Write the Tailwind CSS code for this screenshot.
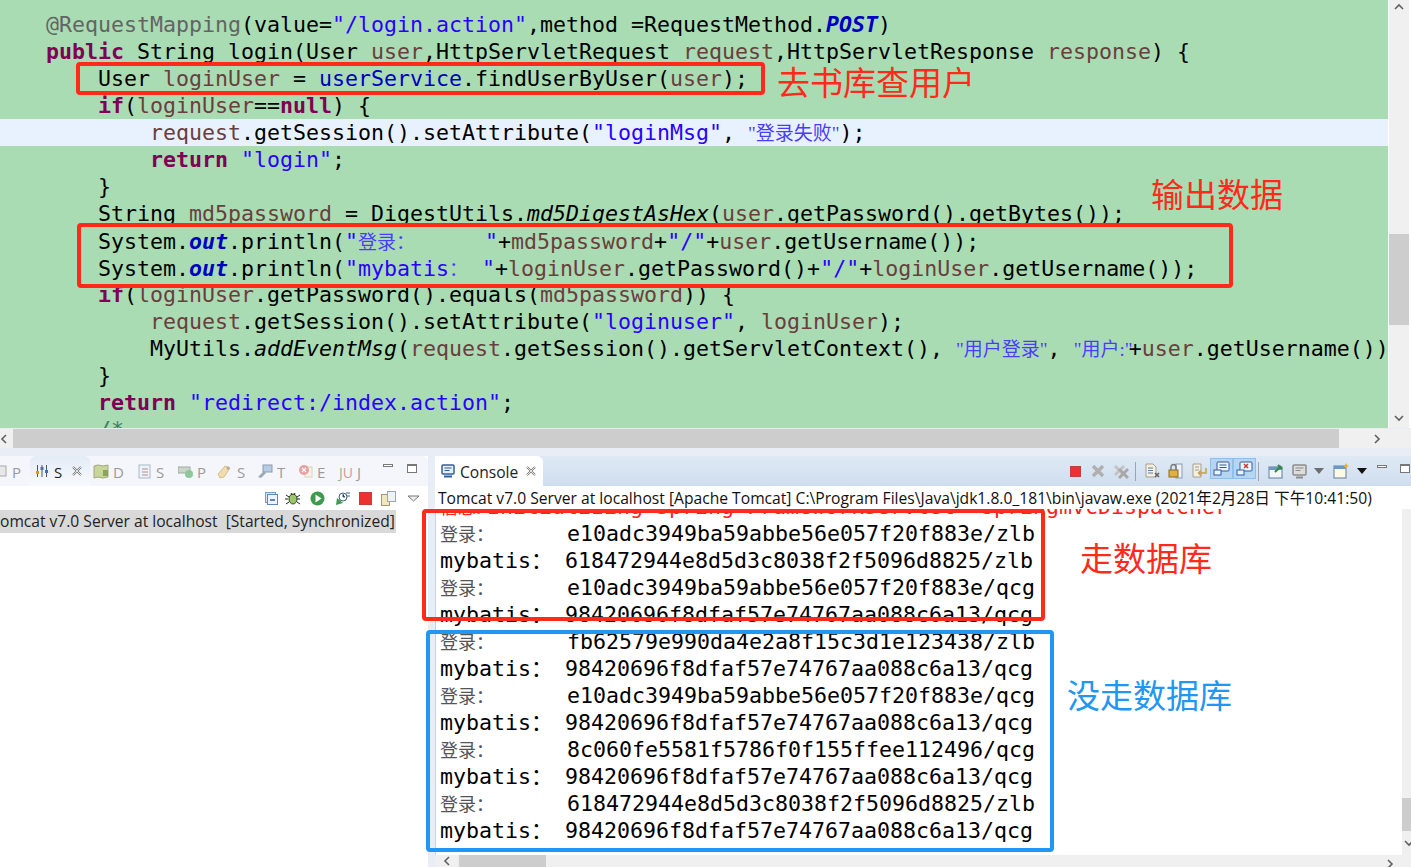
<!DOCTYPE html>
<html lang="zh-CN">
<head>
<meta charset="UTF-8">
<title>Eclipse login</title>
<script src="https://cdn.jsdelivr.net/npm/@tailwindcss/browser@4"></script>
</head>
<body class="relative w-[1411px] h-[867px] overflow-hidden bg-[#e9edf6] font-['Open_Sans','Noto_Sans_CJK_SC',sans-serif]">

<!-- editor -->
<div class="flex h-[428px]">
  <div class="flex-1 min-w-0 overflow-hidden bg-[#aadcb3] pt-[11px] [&>div]:whitespace-pre text-black font-['DejaVu_Sans_Mono',monospace] text-[21.6px] leading-[27px]">
    <div class="h-[27px] pl-[46px]"><span class="text-[#646464]">@RequestMapping</span>(value=<span class="text-[#2a00ff]">"/login.action"</span>,method =RequestMethod.<span class="text-[#0000c0] italic font-bold">POST</span>)</div>
    <div class="h-[27px] pl-[46px]"><span class="text-[#7f0055] font-bold">public</span> String login(User <span class="text-[#6a3e3e]">user</span>,HttpServletRequest <span class="text-[#6a3e3e]">request</span>,HttpServletResponse <span class="text-[#6a3e3e]">response</span>) {</div>
    <div class="h-[27px] pl-[46px]">    User <span class="text-[#6a3e3e]">loginUser</span> = <span class="text-[#0000c0]">userService</span>.findUserByUser(<span class="text-[#6a3e3e]">user</span>);</div>
    <div class="h-[27px] pl-[46px]">    <span class="text-[#7f0055] font-bold">if</span>(<span class="text-[#6a3e3e]">loginUser</span>==<span class="text-[#7f0055] font-bold">null</span>) {</div>
    <div class="h-[27px] pl-[46px] bg-[#e8f2fe]">        <span class="text-[#6a3e3e]">request</span>.getSession().setAttribute(<span class="text-[#2a00ff]">"loginMsg"</span>, <span class="text-[#4a3cff] font-['Liberation_Serif','Noto_Sans_CJK_SC',serif] text-[19px]">"登录失败"</span>);</div>
    <div class="h-[27px] pl-[46px]">        <span class="text-[#7f0055] font-bold">return</span> <span class="text-[#2a00ff]">"login"</span>;</div>
    <div class="h-[27px] pl-[46px]">    }</div>
    <div class="h-[27px] pl-[46px]">    String <span class="text-[#6a3e3e]">md5password</span> = DigestUtils.<span class="italic">md5DigestAsHex</span>(<span class="text-[#6a3e3e]">user</span>.getPassword().getBytes());</div>
    <div class="h-[27px] pl-[46px]">    System.<span class="text-[#0000c0] italic font-bold">out</span>.println(<span class="text-[#2a00ff]">"</span><span class="inline-block w-[127px] text-[#4a3cff] font-['Noto_Sans_CJK_SC',sans-serif] text-[19px]">登录：</span><span class="text-[#2a00ff]">"</span>+<span class="text-[#6a3e3e]">md5password</span>+<span class="text-[#2a00ff]">"/"</span>+<span class="text-[#6a3e3e]">user</span>.getUsername());</div>
    <div class="h-[27px] pl-[46px]">    System.<span class="text-[#0000c0] italic font-bold">out</span>.println(<span class="text-[#2a00ff]">"mybatis</span><span class="inline-block w-[33px] text-[#4a3cff] font-['Noto_Sans_CJK_SC',sans-serif] text-[19px]">：</span><span class="text-[#2a00ff]">"</span>+<span class="text-[#6a3e3e]">loginUser</span>.getPassword()+<span class="text-[#2a00ff]">"/"</span>+<span class="text-[#6a3e3e]">loginUser</span>.getUsername());</div>
    <div class="h-[27px] pl-[46px]">    <span class="text-[#7f0055] font-bold">if</span>(<span class="text-[#6a3e3e]">loginUser</span>.getPassword().equals(<span class="text-[#6a3e3e]">md5password</span>)) {</div>
    <div class="h-[27px] pl-[46px]">        <span class="text-[#6a3e3e]">request</span>.getSession().setAttribute(<span class="text-[#2a00ff]">"loginuser"</span>, <span class="text-[#6a3e3e]">loginUser</span>);</div>
    <div class="h-[27px] pl-[46px]">        MyUtils.<span class="italic">addEventMsg</span>(<span class="text-[#6a3e3e]">request</span>.getSession().getServletContext(), <span class="text-[#4a3cff] font-['Liberation_Serif','Noto_Sans_CJK_SC',serif] text-[19px]">"用户登录"</span>, <span class="inline-block w-[55px] text-[#4a3cff] font-['Liberation_Serif','Noto_Sans_CJK_SC',serif] text-[19px]">"用户:"</span>+<span class="text-[#6a3e3e]">user</span>.getUsername())</div>
    <div class="h-[27px] pl-[46px]">    }</div>
    <div class="h-[27px] pl-[46px]">    <span class="text-[#7f0055] font-bold">return</span> <span class="text-[#2a00ff]">"redirect:/index.action"</span>;</div>
    <div class="h-[27px] pl-[46px]">    <span class="text-[#3f7f5f]">/*</span></div>
  </div>
  <!-- editor vertical scrollbar -->
  <div class="w-[23px] bg-white pl-px">
    <div class="relative h-full w-[20px] bg-[#f0f0f0]">
      <svg class="absolute left-[5px] top-[3px]" width="10" height="8" viewBox="0 0 10 8"><path d="M1 6l4-4 4 4" fill="none" stroke="#606060" stroke-width="1.6"/></svg>
      <div class="absolute left-0 top-[234px] h-[91px] w-full bg-[#cdcdcd]"></div>
      <svg class="absolute left-[5px] top-[414px]" width="10" height="8" viewBox="0 0 10 8"><path d="M1 2l4 4 4-4" fill="none" stroke="#606060" stroke-width="1.6"/></svg>
    </div>
  </div>
</div>

<!-- editor horizontal scrollbar -->
<div class="mt-px flex h-[19px] items-center bg-[#f0f0f0]">
  <svg class="ml-0 mr-[4px]" width="9" height="10" viewBox="0 0 9 10"><path d="M6 1L2 5l4 4" fill="none" stroke="#606060" stroke-width="1.6"/></svg>
  <div class="h-full w-[1326px] bg-[#cdcdcd]"></div>
  <svg class="ml-[34px]" width="9" height="10" viewBox="0 0 9 10"><path d="M2 1l4 4-4 4" fill="none" stroke="#606060" stroke-width="1.6"/></svg>
</div>

<!-- bottom views -->
<div class="mt-[8px] flex h-[411px]">

  <!-- servers view -->
  <div class="w-[428px] bg-white">
    <div class="flex h-[30px] items-center rounded-tr-[6px] bg-[#f4f6fb] text-[15px] text-[#9a9a9a]">
      <svg class="ml-[-2px]" width="10" height="14" viewBox="0 0 10 14"><rect x="0" y="2" width="8" height="10" fill="#e8e8e8" stroke="#aaa"/></svg>
      <span class="ml-[4px] w-[18px] pt-[3px]">P</span>
      <div class="flex h-[30px] w-[60px] items-center rounded-t-[6px] bg-gradient-to-b from-[#e3ebf6] to-[#f8fafd] pl-[5px] text-[#222]">
        <svg width="14" height="14" viewBox="0 0 14 14"><path d="M2.5 1v12M7 1v12M11.500 1v12" stroke="#555"/><rect x="1" y="7" width="3" height="3" fill="#d99a1c"/><rect x="5.500" y="3" width="3" height="3" fill="#3d6fc0"/><rect x="10" y="6" width="3" height="3" fill="#3d6fc0"/></svg>
        <span class="ml-[5px] w-[18px] pt-[3px]">S</span>
        <svg width="10" height="10" viewBox="0 0 10 10"><path d="M1 1l8 8M9 1L1 9" stroke="#777" stroke-width="2"/><path d="M1 1l8 8M9 1L1 9" stroke="#fff" stroke-width="0.8"/></svg>
      </div>
      <svg class="ml-[3px]" width="16" height="15" viewBox="0 0 16 15"><path d="M1 2l4-1 5 1 5-1v12l-5 1-5-1-4 1z" fill="#c9d69a" stroke="#a3a878"/><path d="M10 6h5v6h-5z" fill="#8aa45c"/></svg>
      <span class="ml-[4px] w-[25px] pt-[3px]">D</span>
      <svg width="13" height="15" viewBox="0 0 13 15"><rect x="1" y="1" width="11" height="13" fill="#eef3fa" stroke="#a9b7c9"/><path d="M4 5h6M4 8h6M4 11h6" stroke="#b88a8a"/></svg>
      <span class="ml-[5px] w-[22px] pt-[3px]">S</span>
      <svg width="15" height="13" viewBox="0 0 15 13"><rect x="0" y="2" width="12" height="6" fill="#c9d6c9" stroke="#a0aaa0"/><circle cx="11" cy="9" r="4" fill="#8fc79a"/></svg>
      <span class="ml-[4px] w-[20px] pt-[3px]">P</span>
      <svg width="15" height="15" viewBox="0 0 15 15"><path d="M1 10l7-8 5 2-6 9-4 1z" fill="#f2dcae" stroke="#d8bd8e"/><circle cx="11" cy="4" r="1.500" fill="#aaa"/></svg>
      <span class="ml-[5px] w-[20px] pt-[3px]">S</span>
      <svg width="16" height="15" viewBox="0 0 16 15"><rect x="6" y="1" width="9" height="7" fill="#b6cbe6" stroke="#8a9bb0"/><path d="M1 13l6-6 2 2-5 5z" fill="#9aa7b5"/></svg>
      <span class="ml-[4px] w-[21px] pt-[3px]">T</span>
      <svg width="15" height="15" viewBox="0 0 15 15"><rect x="7" y="3" width="7" height="10" fill="#f7f3ea" stroke="#d8d0ba"/><circle cx="6" cy="6" r="5" fill="#e9a0a0"/><path d="M4 4l4 4M8 4L4 8" stroke="#fff" stroke-width="1.200"/></svg>
      <span class="ml-[4px] w-[22px] pt-[3px]">E</span>
      <span class="w-[18px] pt-[3px] text-[14px] text-[#8fb89a]">J<span class="text-[#d29a9a]">U</span></span>
      <span class="w-[26px] pt-[3px]">J</span>
      <span class="mb-[12px] h-[3px] w-[10px] border border-[#777] bg-white"></span>
      <span class="mb-[5px] ml-[14px] h-[9px] w-[10px] border border-[#777] border-t-2 bg-white"></span>
    </div>
    <!-- servers toolbar -->
    <div class="flex h-[24px] items-center pl-[265px]">
      <svg width="13" height="13" viewBox="0 0 13 13"><rect x="0.500" y="0.500" width="10" height="10" fill="#d6e4f5" stroke="#7d9cc4"/><rect x="2.500" y="2.500" width="10" height="10" fill="#eef4fb" stroke="#5f86b8"/><path d="M5 8h5" stroke="#2f5f9e" stroke-width="1.500"/></svg>
      <svg class="ml-[7px]" width="15" height="15" viewBox="0 0 15 15"><ellipse cx="8" cy="8" rx="4" ry="5" fill="#9cc66a" stroke="#2c4a1c"/><path d="M1 4l3 2M15 4l-3 2M0 8h3M15 8h-3M1 13l3-2M15 13l-3-2M6 2l1 2M10 2L9 4" stroke="#222"/></svg>
      <svg class="ml-[10px]" width="15" height="15" viewBox="0 0 15 15"><circle cx="7.500" cy="7.500" r="7" fill="#3e9a4c"/><path d="M5.500 3.500l6 4-6 4z" fill="#fff"/></svg>
      <svg class="ml-[10px]" width="15" height="15" viewBox="0 0 15 15"><path d="M1 14l1-7 6 5z" fill="#3e9a4c"/><circle cx="8" cy="6" r="4" fill="#fff" stroke="#3a5f8a"/><path d="M8 3v3h2M11 2h4M12 5h3" stroke="#3a5f8a"/></svg>
      <span class="ml-[9px] h-[13px] w-[13px] border border-[#c04040] bg-[#ee3030]"></span>
      <svg class="ml-[9px]" width="15" height="15" viewBox="0 0 15 15"><rect x="0.500" y="3.500" width="8" height="11" fill="#f3e6bf" stroke="#a09878"/><rect x="6.500" y="0.500" width="8" height="10" fill="#eef2f8" stroke="#9aa5b5"/></svg>
      <svg class="ml-[11px]" width="13" height="7" viewBox="0 0 13 7"><path d="M1 1h11L6.500 6z" fill="#f0f0f0" stroke="#777"/></svg>
    </div>
    <div class="whitespace-pre bg-[#d9d9d9] h-[23px] w-[396px] text-[15.6px] leading-[23px] text-[#222]">omcat v7.0 Server at localhost  [Started, Synchronized]</div>
  </div>

  <!-- console view -->
  <div class="ml-[7px] flex min-w-0 flex-1 flex-col bg-white">
    <div class="flex h-[30px] items-center rounded-tl-[6px] bg-gradient-to-b from-[#dfe9f5] to-[#cfdeef]">
      <div class="flex h-[30px] w-[108px] items-center rounded-t-[6px] bg-white pl-[6px] text-[15.6px] text-[#222]">
        <svg width="14" height="14" viewBox="0 0 14 14"><rect x="1" y="1" width="12" height="9" rx="1" fill="#e8eef6" stroke="#2f5f9e" stroke-width="1.500"/><path d="M3.500 4h7M3.500 6.500h5" stroke="#2f5f9e"/><path d="M3 12.500h8" stroke="#2f5f9e" stroke-width="2"/></svg>
        <span class="ml-[5px] w-[66px] pt-[3px]">Console</span>
        <svg width="10" height="10" viewBox="0 0 10 10"><path d="M1 1l8 8M9 1L1 9" stroke="#777" stroke-width="2"/><path d="M1 1l8 8M9 1L1 9" stroke="#fff" stroke-width="0.8"/></svg>
      </div>
      <!-- console toolbar -->
      <span class="ml-[527px] h-[11px] w-[11px] border border-[#c04040] bg-[#ee3030]"></span>
      <svg class="ml-[10px]" width="14" height="14" viewBox="0 0 14 14"><path d="M2 2l10 10M12 2L2 12" stroke="#b0b0b0" stroke-width="3.500"/></svg>
      <svg class="ml-[8px]" width="16" height="16" viewBox="0 0 16 16"><path d="M2 3l9 9M11 3l-9 9" stroke="#c4c4c4" stroke-width="3"/><path d="M6 6l9 9M15 6l-9 9" stroke="#a8a8a8" stroke-width="3"/></svg>
      <span class="ml-[6px] h-[19px] w-px bg-[#9aa5b0]"></span>
      <svg class="ml-[9px]" width="15" height="16" viewBox="0 0 15 16"><path d="M1 1h7l3 3v10H1z" fill="#f3efe2" stroke="#a5a08c"/><path d="M3 5h5M3 7.500h5M3 10h5" stroke="#5d7ea8"/><path d="M10 10l4 4M14 10l-4 4" stroke="#666" stroke-width="1.600"/></svg>
      <svg class="ml-[8px]" width="15" height="16" viewBox="0 0 15 16"><rect x="8" y="1" width="6" height="14" fill="#eef3f9" stroke="#8b9bb0"/><rect x="1" y="7" width="9" height="7" fill="#e0b040" stroke="#8a6a20"/><path d="M3 7V4a2.500 2.500 0 0 1 5 0v3" fill="none" stroke="#777" stroke-width="1.400"/></svg>
      <svg class="ml-[9px]" width="15" height="16" viewBox="0 0 15 16"><path d="M1 1h8v13H1z" fill="#f3efe2" stroke="#a5a08c"/><path d="M3 4h4M3 7h4" stroke="#9a9a9a"/><path d="M14 5v5H7M9 7.500L6.500 10 9 12.500" fill="none" stroke="#c8a040" stroke-width="1.500"/></svg>
      <span class="mb-[5px] ml-[3px] flex h-[21px] w-[23px] items-center justify-center border border-[#8fbfec] bg-[#b5d5f5]">
        <svg width="17" height="16" viewBox="0 0 17 16"><rect x="4" y="1" width="12" height="9" rx="1" fill="#eef4fb" stroke="#2f5f9e"/><path d="M6.500 4h7M6.500 6.500h7" stroke="#2f5f9e"/><rect x="1" y="9" width="7" height="5" fill="#eef4fb" stroke="#2f5f9e"/></svg>
      </span>
      <span class="mb-[5px] flex h-[21px] w-[23px] items-center justify-center border border-[#8fbfec] bg-[#b5d5f5]">
        <svg width="17" height="16" viewBox="0 0 17 16"><rect x="4" y="1" width="12" height="9" rx="1" fill="#eef4fb" stroke="#2f5f9e"/><path d="M8 3l4 4M12 3L8 7" stroke="#d63030" stroke-width="1.500"/><rect x="1" y="9" width="7" height="5" fill="#eef4fb" stroke="#2f5f9e"/></svg>
      </span>
      <span class="ml-[2px] h-[19px] w-px bg-[#9aa5b0]"></span>
      <svg class="ml-[9px]" width="16" height="16" viewBox="0 0 16 16"><rect x="1" y="4" width="13" height="11" fill="#f4f6f9" stroke="#5f7f9f"/><rect x="1" y="4" width="13" height="3" fill="#6f97c4"/><path d="M7 9l6-6M10 2l4 4" stroke="#2f8a3c" stroke-width="2"/></svg>
      <svg class="ml-[8px]" width="15" height="15" viewBox="0 0 15 15"><rect x="1" y="1" width="13" height="10" rx="1" fill="#dcdcdc" stroke="#8c8c8c" stroke-width="1.500"/><path d="M3.500 4h8M3.500 6.500h5" stroke="#8c8c8c"/><path d="M4 13.500h7" stroke="#8c8c8c" stroke-width="2"/></svg>
      <svg class="ml-[7px]" width="10" height="6" viewBox="0 0 10 6"><path d="M0 0h10L5 6z" fill="#6e6e6e"/></svg>
      <svg class="ml-[9px]" width="16" height="16" viewBox="0 0 16 16"><rect x="1" y="3" width="12" height="12" fill="#fdf8e4" stroke="#5f7f9f"/><rect x="1" y="3" width="12" height="3" fill="#6f97c4"/><path d="M13 0l1 2 2 1-2 1-1 2-1-2-2-1 2-1z" fill="#e8b030"/></svg>
      <svg class="ml-[8px]" width="10" height="6" viewBox="0 0 10 6"><path d="M0 0h10L5 6z" fill="#111"/></svg>
      <span class="mb-[10px] ml-[10px] h-[3px] w-[10px] border border-[#777] bg-white"></span>
      <span class="mb-[5px] ml-[13px] h-[9px] w-[10px] border border-[#777] border-t-2 bg-white"></span>
    </div>
    <div class="h-[23px] whitespace-pre pl-[3px] text-[15.65px] leading-[25px] text-[#111]">Tomcat v7.0 Server at localhost [Apache Tomcat] C:\Program Files\Java\jdk1.8.0_181\bin\javaw.exe (2021年2月28日 下午10:41:50)</div>
    <div class="flex min-h-0 flex-1">
      <div class="flex-1 min-w-0 overflow-hidden border-l border-[#c5d5e8] pl-[4px] [&>div]:whitespace-pre text-[#000] font-['DejaVu_Sans_Mono',monospace] text-[21.6px] leading-[27px]">
        <div class="mt-[-16px] h-[27px] text-[#ff2020]"><span class="inline-block w-[47px] font-['Noto_Sans_CJK_SC',sans-serif] text-[18px]">信息:</span>Initializing Spring FrameworkServlet 'springmvcDispatcher</div>
        <div class="h-[27px]"><span class="inline-block w-[127px] text-[#555] font-['Noto_Sans_CJK_SC',sans-serif] text-[18px]">登录：</span>e10adc3949ba59abbe56e057f20f883e/zlb</div>
        <div class="h-[27px]"><span class="inline-block w-[125px]">mybatis：</span>618472944e8d5d3c8038f2f5096d8825/zlb</div>
        <div class="h-[27px]"><span class="inline-block w-[127px] text-[#555] font-['Noto_Sans_CJK_SC',sans-serif] text-[18px]">登录：</span>e10adc3949ba59abbe56e057f20f883e/qcg</div>
        <div class="h-[27px]"><span class="inline-block w-[125px]">mybatis：</span>98420696f8dfaf57e74767aa088c6a13/qcg</div>
        <div class="h-[27px]"><span class="inline-block w-[127px] text-[#555] font-['Noto_Sans_CJK_SC',sans-serif] text-[18px]">登录：</span>fb62579e990da4e2a8f15c3d1e123438/zlb</div>
        <div class="h-[27px]"><span class="inline-block w-[125px]">mybatis：</span>98420696f8dfaf57e74767aa088c6a13/qcg</div>
        <div class="h-[27px]"><span class="inline-block w-[127px] text-[#555] font-['Noto_Sans_CJK_SC',sans-serif] text-[18px]">登录：</span>e10adc3949ba59abbe56e057f20f883e/qcg</div>
        <div class="h-[27px]"><span class="inline-block w-[125px]">mybatis：</span>98420696f8dfaf57e74767aa088c6a13/qcg</div>
        <div class="h-[27px]"><span class="inline-block w-[127px] text-[#555] font-['Noto_Sans_CJK_SC',sans-serif] text-[18px]">登录：</span>8c060fe5581f5786f0f155ffee112496/qcg</div>
        <div class="h-[27px]"><span class="inline-block w-[125px]">mybatis：</span>98420696f8dfaf57e74767aa088c6a13/qcg</div>
        <div class="h-[27px]"><span class="inline-block w-[127px] text-[#555] font-['Noto_Sans_CJK_SC',sans-serif] text-[18px]">登录：</span>618472944e8d5d3c8038f2f5096d8825/zlb</div>
        <div class="h-[27px]"><span class="inline-block w-[125px]">mybatis：</span>98420696f8dfaf57e74767aa088c6a13/qcg</div>
      </div>
      <!-- console vertical scrollbar -->
      <div class="relative w-[9px] bg-[#f0f0f0]">
        <div class="absolute left-0 top-[289px] h-[33px] w-full bg-[#cdcdcd]"></div>
        <svg class="absolute left-[2px] top-[330px]" width="10" height="8" viewBox="0 0 10 8"><path d="M1 2l4 4 4-4" fill="none" stroke="#606060" stroke-width="1.600"/></svg>
      </div>
    </div>
    <!-- console horizontal scrollbar -->
    <div class="flex h-[12px] items-center bg-[#f0f0f0] pl-[8px]">
      <svg width="8" height="10" viewBox="0 0 8 10"><path d="M6 1L2 5l4 4" fill="none" stroke="#606060" stroke-width="1.600"/></svg>
      <div class="ml-[8px] h-full w-[87px] bg-[#cdcdcd]"></div>
      <svg class="ml-[840px] mt-[6px]" width="8" height="10" viewBox="0 0 8 10"><path d="M2 1l4 4-4 4" fill="none" stroke="#606060" stroke-width="1.600"/></svg>
    </div>
  </div>
</div>

<!-- hand drawn annotations on top of the screenshot -->
<div class="absolute left-[76px] top-[62px] h-[33px] w-[689px] rounded-[4px] border-[4px] border-[#ff2a1a]"></div>
<div class="absolute left-[77px] top-[223px] h-[65px] w-[1156px] rounded-[4px] border-[4px] border-[#ff2a1a]"></div>
<div class="absolute left-[422px] top-[509px] h-[112px] w-[623px] rounded-[4px] border-[4px] border-[#ff2a1a]"></div>
<div class="absolute left-[426px] top-[630px] h-[222px] w-[628px] rounded-[4px] border-[4px] border-[#2196f3]"></div>
<div class="absolute left-[777px] top-[57px] text-[33px] leading-[48px] text-[#ff2a1a] font-['Noto_Sans_CJK_SC',sans-serif]">去书库查用户</div>
<div class="absolute left-[1151px] top-[169px] text-[33px] leading-[48px] text-[#ff2a1a] font-['Noto_Sans_CJK_SC',sans-serif]">输出数据</div>
<div class="absolute left-[1080px] top-[533px] text-[33px] leading-[48px] text-[#ff2a1a] font-['Noto_Sans_CJK_SC',sans-serif]">走数据库</div>
<div class="absolute left-[1067px] top-[670px] text-[33px] leading-[48px] text-[#2196f3] font-['Noto_Sans_CJK_SC',sans-serif]">没走数据库</div>

</body>
</html>
